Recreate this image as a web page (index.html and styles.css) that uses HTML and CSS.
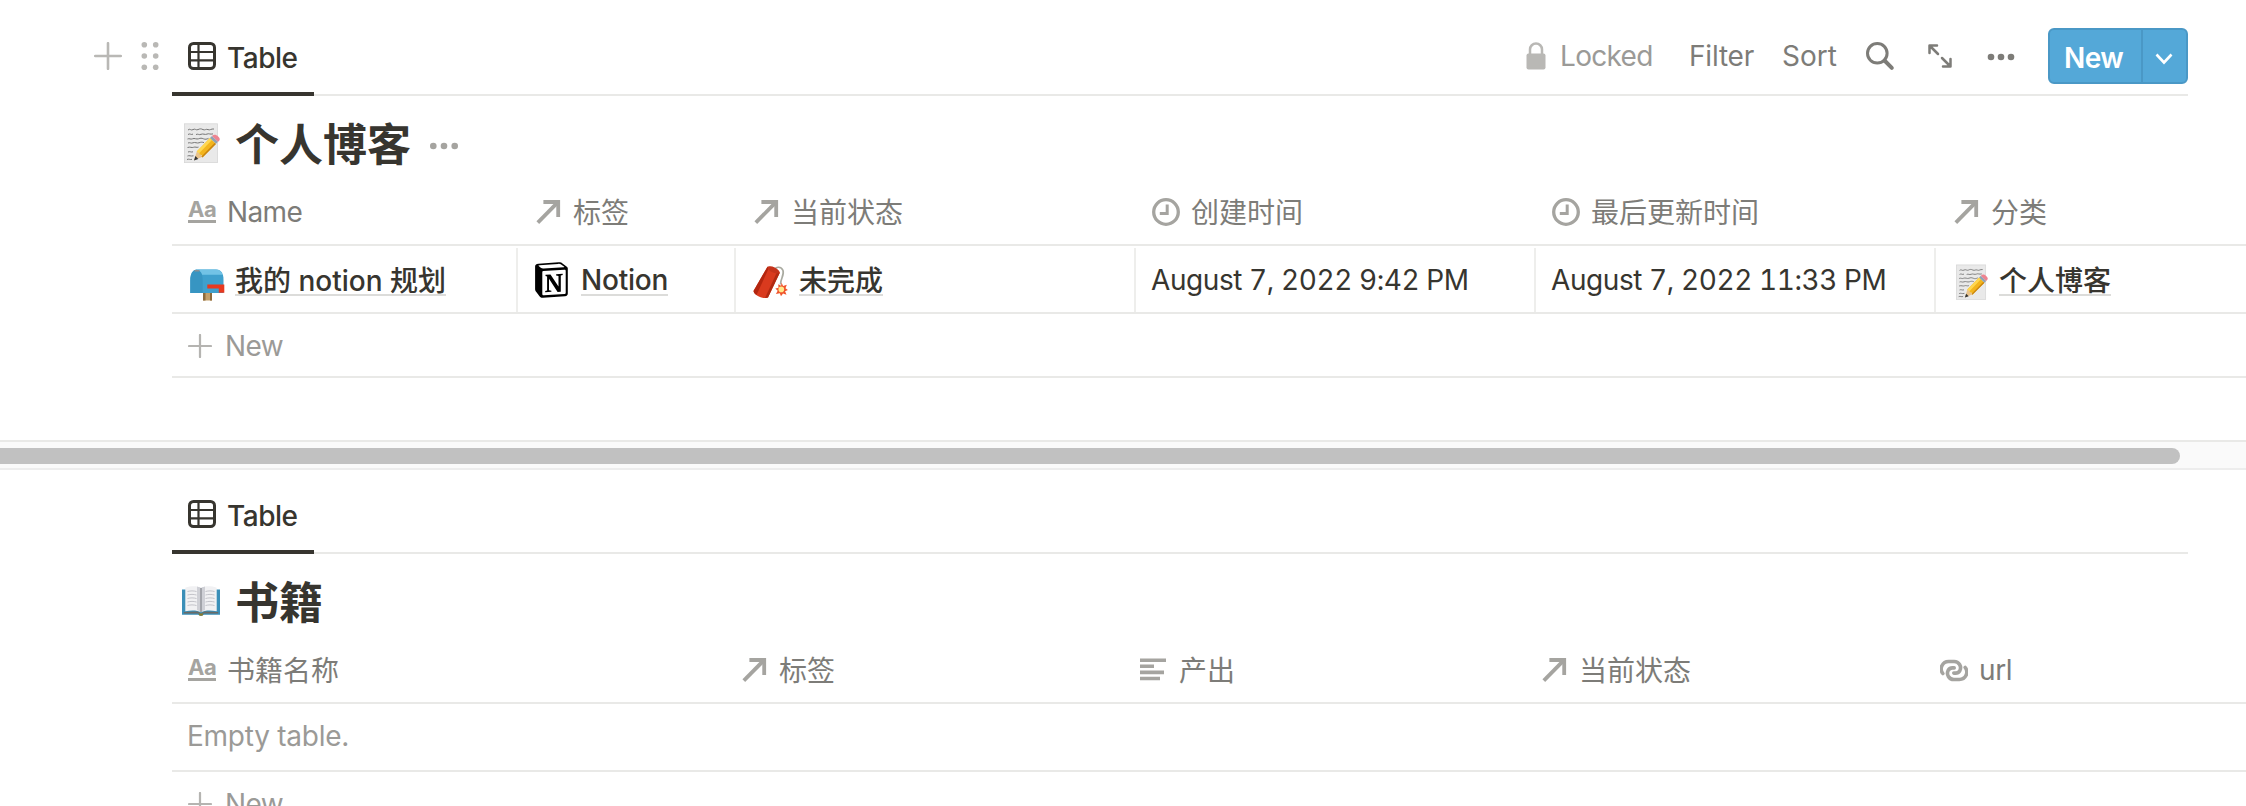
FILE: index.html
```html
<!DOCTYPE html>
<html lang="zh-CN">
<head>
<meta charset="utf-8">
<title>个人博客</title>
<link rel="stylesheet" href="styles.css">
</head>
<body>
<svg class="defs" aria-hidden="true">
  <symbol id="i-table" viewBox="0 0 28 28"><rect x="1.5" y="1.5" width="25" height="25" rx="4" fill="none" stroke="currentColor" stroke-width="3"/><path d="M10.5 2v24M2 10h24M2 18.3h24" fill="none" stroke="currentColor" stroke-width="2.2"/></symbol>
  <symbol id="i-plus" viewBox="0 0 28 28"><path d="M14 1.2v25.6M1.2 14h25.6" stroke="currentColor" stroke-width="2.6" stroke-linecap="round"/></symbol>
  <symbol id="i-arrow" viewBox="0 0 28 28"><path d="M3.8 24.6L23 5.2" stroke="currentColor" stroke-width="3.8" stroke-linecap="butt"/><path d="M9.4 4H24.2V19" fill="none" stroke="currentColor" stroke-width="3.8"/></symbol>
  <symbol id="i-clock" viewBox="0 0 28 28"><circle cx="14" cy="14" r="12.3" fill="none" stroke="currentColor" stroke-width="3.3"/><path d="M15.2 6.4v9.2H7.8" fill="none" stroke="currentColor" stroke-width="3"/></symbol>
  <symbol id="i-lines" viewBox="0 0 28 28"><path d="M0 4.2h26M0 10.2h14M0 16.4h24M0 22.5h20" stroke="currentColor" stroke-width="3.6"/></symbol>
  <symbol id="i-link" viewBox="0 0 28 28"><g fill="none" stroke="currentColor" stroke-width="3.6" stroke-linecap="round"><path d="M2.800 17.500A7.400 7.400 0 0 1 8.600 5.500h5.600a6.300 6.300 0 0 1 5.600 9.200 5 5 0 0 1-4.500 2.400h-1.500"/><path d="M25.200 11.500a7.400 7.400 0 0 1-5.800 12h-5.600a6.300 6.300 0 0 1-5.600-9.200 5 5 0 0 1 4.500-2.400h1.500"/></g></symbol>
  <symbol id="e-memo" viewBox="0 0 36 40">
    <rect x=".4" y=".8" width="33" height="38.8" fill="#e9e9e9" stroke="#d6d6d6" stroke-width=".8"/>
    <path d="M4 7c2-2 3 1 5-.4s3 1 5 0 3-1 5 0 3-1 5 0 3-1 6-.6M4 11.500c2-1.500 3 .8 5-.4M12 11.500c2-1 3 .8 5-.2s4 .8 6-.2 3 .6 6-.2M3.500 16c2-1 3 .8 5-.2s4 .8 6 0 3-.8 5 0 3 .4 5-.4M4 20c2-1 3 .8 5-.2s4 .8 6 0 3-.8 5-.2M3.500 24.500c3-1 4 .6 6-.2s3 .6 5-.2M4 29c2-1 3 .6 5-.2M3.500 33c2-1 3 .6 6-.2M3 36.500c2-1 3 .6 5-.2" fill="none" stroke="#777" stroke-width="1"/>
    <path d="M10 37.300L13 28l5.500 5.700z" fill="#e9c38b"/><path d="M10 37.500l1.400-4.400 2.900 2.900z" fill="#333"/>
    <path d="M12.700 28.500L26 15l6 5.800L18.500 34.400c-.3-2-1.300-2.900-2.900-2.900-.2-1.700-1.200-2.700-2.900-3z" fill="#f3b51d"/><path d="M12.700 28.500L26 15l2 1.900-12.900 13.400z" fill="#ffd750"/><path d="M17.500 33.500L30.600 20l1.400.9-13.500 13.500z" fill="#c98511"/>
    <path d="M26 15l2-2 6 5.800-2 2z" fill="#8fa3b5"/><path d="M28 13c2-2 4-1.600 6.200.5s2 3.600-.2 5.300z" fill="#ee8490"/>
  </symbol>
  <symbol id="e-mail" viewBox="0 0 35 32">
    <path d="M13 22h9v9.500h-9z" fill="#c4a06a"/><path d="M13 23h2.500v8.500H13zM20 23h2v8.500h-2z" fill="#8e6b3c"/>
    <path d="M6.500.5H26c5 0 7.500 4 7.500 10v13.500H.3V11C.3 5 3 .5 6.500.5z" fill="#3fa0cd"/>
    <path d="M6.500.5H26c3.500 0 5.600 2 6.700 5.300H12C11 3 9 .8 6.500.5z" fill="#72c3e6"/>
    <path d="M.3 24V11C.3 5 3 .8 6.500.8S12.700 5 12.700 11v13z" fill="#3795c2"/><path d="M4.500 1h5v1.500h-5z" fill="#8a8f93"/>
    <path d="M17.300 15.500h17v8.300h-5.500v-4.300H17.300z" fill="#e8391f"/>
  </symbol>
  <symbol id="e-fire" viewBox="0 0 35 33">
    <path d="M20 4.500C23 0 28.500.3 30 4.500c1.500 4.500-2.500 8-2.500 14" fill="none" stroke="#a9aaa0" stroke-width="1.700"/>
    <path d="M14.500.8c4-.4 10.600 2.400 12.300 6L15 31.500c-4.500 2-13.500-1.700-14.500-6.500z" fill="#d93a1e"/>
    <path d="M14.500.8l1.800.3L3.500 29C2 28 .8 27 .5 25z" fill="#b3260f"/><path d="M24.500 5l2.300 1.800L15 31.500l-3 .5z" fill="#b02a12"/>
    <ellipse cx="20.600" cy="3.900" rx="6.400" ry="2.600" transform="rotate(25 20.600 3.900)" fill="#c4331b"/>
    <path d="M28.500 16.500l1.600 3.500 3.700-1.300-1.300 3.600 2.400 1.700-2.800 1.300 1.400 3.400-3.500-1.200-2 2.800-1.200-3-3.900.7 1.800-3.300-2.400-2.300 3.200-.6-.3-3.600 2.900 1.600z" fill="#f0552c"/><circle cx="28.300" cy="23.400" r="2.800" fill="#ffe98a"/>
  </symbol>
  <symbol id="e-book" viewBox="0 0 38 30">
    <path d="M0 3.500h38v25.300H22l-3 1.200-3-1.200H0z" fill="#3b8fb8"/>
    <path d="M1.800 26l14-.6 3.200 1.800 3.200-1.800 14 .6v1.600H1.800z" fill="#6b6b66"/>
    <path d="M3.300 1.800C9-.2 15.500-.2 19 2c3.500-2.200 10-2.200 15.700-.2v23.400c-6-1-12-1-15.700 1-3.700-2-9.700-2-15.700-1z" fill="#f1f1f3"/>
    <path d="M19 2c-1.600-1-3.200-1.400-4-1.500v23.700c1.700.4 3 1 4 2 1-1 2.300-1.600 4-2V.5C22.200.6 20.600 1 19 2z" fill="#cfd0d6"/><path d="M19 2v24" stroke="#77787e"/>
    <path d="M5.500 5.500c3-.8 6-.8 9 0M5.500 9c3-.8 6-.8 9 0M5.500 12.500c3-.8 6-.8 9 0M5.500 16c3-.8 6-.8 9 0M5.500 19.500c3-.8 6-.8 9 0M23.500 5.500c3-.8 6-.8 9 0M23.500 9c3-.8 6-.8 9 0M23.500 12.500c3-.8 6-.8 9 0M23.500 16c3-.8 6-.8 9 0M23.500 19.500c3-.8 6-.8 9 0" fill="none" stroke="#c4c4ca" stroke-width="1"/>
    <path d="M16.500 27.500h5l-1 2.300h-3z" fill="#8a7a2c"/>
  </symbol>
  <symbol id="e-notion" viewBox="0 0 33 36">
    <path d="M3.500 1.700L23.500.3c2-.1 2.700.2 4 1.100l4 3c1 .7 1.300 1 1.300 2.200v24.700c0 1.800-.7 2.800-2.800 3L8 35.800c-1.600.1-2.400-.2-3.300-1.300L1.300 30C.4 28.800.1 28 .1 27V4.600C.1 3 .9 1.900 3.500 1.700z" fill="#000"/>
    <path d="M4.500 3.200l18.600-1.300c1.500-.1 2 0 3 .7l2.800 1.900c.7.500.3.700-.4.800L8.700 6.500c-1.400.1-2.100-.2-2.900-.8L3.700 4.100c-.4-.4-.1-.8.8-.9z" fill="#fff"/>
    <path d="M8.300 9l21-1.300c1-.1 1.400.4 1.400 1.200v21.600c0 1-.4 1.500-1.500 1.600L9 33.300c-1.200.1-1.700-.4-1.700-1.500V10.200c0-.7.300-1.100 1-1.200z" fill="#fff"/>
    <path d="M10.500 12.700l5-.3 8 12.200V13.900l-2.400-.5v-1.200l6.600-.4V13l-1.900.6v16.100l-3.200.2-8.600-13.200v11.500l2.400.6v1l-6.200.4v-1.100l1.900-.6V14.400l-1.600-.4z" fill="#000"/>
  </symbol>
</svg>

<main class="page">
  <section class="db">
    <div class="toolbar">
      <div class="handles">
        <svg class="ic28"><use href="#i-plus"/></svg>
        <svg class="grip" viewBox="0 0 18 28" fill="currentColor"><circle cx="3.300" cy="2.800" r="2.800"/><circle cx="14.700" cy="2.800" r="2.800"/><circle cx="3.300" cy="14" r="2.800"/><circle cx="14.700" cy="14" r="2.800"/><circle cx="3.300" cy="25.200" r="2.800"/><circle cx="14.700" cy="25.200" r="2.800"/></svg>
      </div>
      <div class="tabs">
        <div class="tab"><svg class="ic28"><use href="#i-table"/></svg><span>Table</span></div>
        <div class="actions">
          <span class="locked"><svg class="lock" viewBox="0 0 20 28"><rect x=".5" y="11.500" width="19" height="16" rx="2" fill="currentColor"/><path d="M4 12V7.500a6 6 0 0 1 12 0V12" fill="none" stroke="currentColor" stroke-width="2.500"/></svg><span>Locked</span></span>
          <span class="filter">Filter</span>
          <span class="sort">Sort</span>
          <svg class="ic28 search" viewBox="0 0 28 28"><circle cx="11.300" cy="11.300" r="9.800" fill="none" stroke="currentColor" stroke-width="3"/><path d="M18.500 18.500l7.300 7.300" stroke="currentColor" stroke-width="4" stroke-linecap="round"/></svg>
          <svg class="expand" viewBox="0 0 24 24" fill="none" stroke="currentColor" stroke-width="2.500" stroke-linecap="round" stroke-linejoin="round"><path d="M1.500 9V1.500H9M2 2l8 8M14 14l8 8M22.500 15v7.500H15"/></svg>
          <svg class="more" viewBox="0 0 28 8" fill="currentColor"><circle cx="4" cy="4" r="3.300"/><circle cx="14" cy="4" r="3.300"/><circle cx="24" cy="4" r="3.300"/></svg>
          <span class="btn"><span class="btn-main">New</span><span class="btn-drop"><svg class="chev" viewBox="0 0 18 12"><path d="M1.500 1.500L9 9.500l7.500-8" fill="none" stroke="#fff" stroke-width="2.600"/></svg></span></span>
        </div>
      </div>
    </div>
    <div class="title"><svg class="e-title"><use href="#e-memo"/></svg><h2>个人博客</h2><svg class="title-more" viewBox="0 0 28 8" fill="currentColor"><circle cx="3.300" cy="4" r="3.300"/><circle cx="14" cy="4" r="3.300"/><circle cx="24.700" cy="4" r="3.300"/></svg></div>
    <div class="row head cols-a">
      <div class="th"><span class="aa">Aa</span><span class="name latin">Name</span></div>
      <div class="th"><svg class="ic28"><use href="#i-arrow"/></svg><span>标签</span></div>
      <div class="th"><svg class="ic28"><use href="#i-arrow"/></svg><span>当前状态</span></div>
      <div class="th"><svg class="ic28"><use href="#i-clock"/></svg><span>创建时间</span></div>
      <div class="th"><svg class="ic28"><use href="#i-clock"/></svg><span>最后更新时间</span></div>
      <div class="th"><svg class="ic28"><use href="#i-arrow"/></svg><span>分类</span></div>
    </div>
    <div class="row data cols-a">
      <div class="td"><svg class="mail"><use href="#e-mail"/></svg><span class="link">我的 notion 规划</span></div>
      <div class="td"><svg class="notion"><use href="#e-notion"/></svg><span class="link link-latin latin">Notion</span></div>
      <div class="td"><svg class="fire"><use href="#e-fire"/></svg><span class="link">未完成</span></div>
      <div class="td"><span class="date latin">August 7, 2022 9:42 PM</span></div>
      <div class="td"><span class="date latin">August 7, 2022 11:33 PM</span></div>
      <div class="td"><svg class="memo"><use href="#e-memo"/></svg><span class="link">个人博客</span></div>
    </div>
    <div class="row add"><svg class="ic24"><use href="#i-plus"/></svg><span>New</span></div>
  </section>

  <div class="scroll"><div class="thumb"></div></div>

  <section class="db second">
    <div class="toolbar">
      <div class="handles"></div>
      <div class="tabs">
        <div class="tab"><svg class="ic28"><use href="#i-table"/></svg><span>Table</span></div>
      </div>
    </div>
    <div class="title"><svg class="e-book"><use href="#e-book"/></svg><h2>书籍</h2></div>
    <div class="row head cols-b">
      <div class="th"><span class="aa">Aa</span><span>书籍名称</span></div>
      <div class="th"><svg class="ic28"><use href="#i-arrow"/></svg><span>标签</span></div>
      <div class="th"><svg class="ic28"><use href="#i-lines"/></svg><span>产出</span></div>
      <div class="th"><svg class="ic28"><use href="#i-arrow"/></svg><span>当前状态</span></div>
      <div class="th"><svg class="ic28"><use href="#i-link"/></svg><span class="url latin">url</span></div>
    </div>
    <div class="row empty"><span>Empty table.</span></div>
    <div class="row add"><svg class="ic24"><use href="#i-plus"/></svg><span>New</span></div>
  </section>
</main>
</body>
</html>
```
FILE: styles.css
```css
* { box-sizing: border-box; }
body {
  margin: 0;
  background: #fff;
  color: #37352f;
  font: 400 28px/36px Inter, "Noto Sans CJK SC", sans-serif;
}
svg { display: block; flex: none; overflow: visible; }
span { white-space: nowrap; }
.defs { position: absolute; width: 0; height: 0; }
.page { width: 2246px; height: 806px; overflow: hidden; }
.db { height: 440px; }
.second { height: 364px; margin-top: -12px; }

.toolbar { display: flex; height: 96px; }
.handles { display: flex; width: 172px; padding: 42px 0 0 94px; gap: 19px; color: #b9b8b5; }
.grip { width: 18px; height: 28px; }
.ic28 { width: 28px; height: 28px; }
.ic24 { width: 24px; height: 24px; }
.tabs { display: flex; justify-content: space-between; width: 2016px; border-bottom: 2px solid #e9e9e7; }
.tab { display: flex; gap: 11px; width: 142px; height: 96px; padding: 40px 0 0 16px; border-bottom: 4px solid #37352f; font-weight: 500; letter-spacing: -0.5px; }
.tab svg { margin-top: 2px; }
.actions { display: flex; align-items: flex-start; padding-top: 28px; color: #7d7c78; }
.actions > * { margin-top: 10px; }
.locked { display: flex; width: 164px; gap: 14px; color: #9b9a97; letter-spacing: -0.7px; }
.lock { width: 20px; height: 28px; margin-top: 4px; color: #b9b8b5; }
.filter { width: 93px; margin-left: -1px; letter-spacing: -0.2px; }
.sort { width: 84px; }
.actions .search { margin-top: 14px; }
.expand { width: 24px; height: 24px; margin-left: 34px; }
.actions .expand { margin-top: 16px; }
.more { width: 28px; height: 8px; margin-left: 35px; }
.actions .more { margin-top: 25px; }
.actions .btn { display: flex; width: 140px; height: 56px; margin: 0 0 0 33px; border: 2px solid #4a98c6; border-radius: 6px; background: #54a8d8; color: #fff; font-weight: 600; letter-spacing: -0.6px; }
.btn-main { width: 93px; padding: 10px 0 0 14px; border-right: 2px solid #4a98c6; }
.chev { width: 18px; height: 12px; margin: 23px 0 0 12px; }

.title { display: flex; height: 84px; padding: 20px 0 0 184px; }
.title h2 { margin: 1px 0 0; font-size: 44px; line-height: 56px; font-weight: 700; }
.e-title { width: 36px; height: 40px; margin: 7px 15px 0 0; }
.e-book { width: 38px; height: 30px; margin: 12px 15px 0 -2px; }
.title-more { width: 28px; height: 8px; margin: 26px 0 0 19px; color: #a5a4a0; }

.row { margin-left: 172px; border-bottom: 2px solid #e9e9e7; }
.cols-a { display: grid; grid-template-columns: 346px 218px 400px 400px 400px 310px; }
.cols-b { display: grid; grid-template-columns: 552px 400px 400px 400px 322px; }
.head { height: 66px; color: #7d7c78; }
.th { display: flex; gap: 11px; padding: 15px 0 0 16px; }
.th svg { margin-top: 3px; color: #a5a4a0; }
.latin { margin-top: -1px; }
.name { letter-spacing: -0.6px; }
.url { letter-spacing: -0.4px; }
.aa { width: 28px; height: 22px; margin-top: 6px; border-bottom: 3px solid #a5a4a0; color: #a5a4a0; font-size: 22px; line-height: 16px; font-weight: 700; letter-spacing: -0.4px; }
.data { height: 68px; padding-top: 2px; }
.td { display: flex; padding: 15px 0 0 16px; border-right: 2px solid #eeeeec; }
.td:last-child { border-right: 0; }
.link { height: 33px; margin-left: -1px; border-bottom: 2px solid #dcdcda; font-weight: 500; }
.link-latin { height: 34px; letter-spacing: -0.2px; }
.date { margin-left: -1px; font-variant-numeric: tabular-nums; letter-spacing: -0.43px; }
.mail { width: 35px; height: 32px; margin: 6px 11px 0 2px; }
.notion { width: 33px; height: 36px; margin: -1px 14px 0 1px; }
.fire { width: 35px; height: 33px; margin: 3px 12px 0 1px; }
.memo { width: 32px; height: 36px; margin: 1px 12px 0 4px; }
.add { display: flex; gap: 13px; height: 64px; padding: 14px 0 0 16px; color: #9b9a97; letter-spacing: -0.6px; }
.add svg { margin-top: 6px; color: #b5b4b1; }
.empty { height: 68px; padding: 14px 0 0 15px; color: #9b9a97; letter-spacing: -0.25px; }

.scroll { height: 30px; padding-top: 6px; border-top: 2px solid #e9e9e7; border-bottom: 2px solid #ededed; background: #fafafa; }
.thumb { width: 2180px; height: 16px; border-radius: 0 8px 8px 0; background: #c1c1c1; }
```
